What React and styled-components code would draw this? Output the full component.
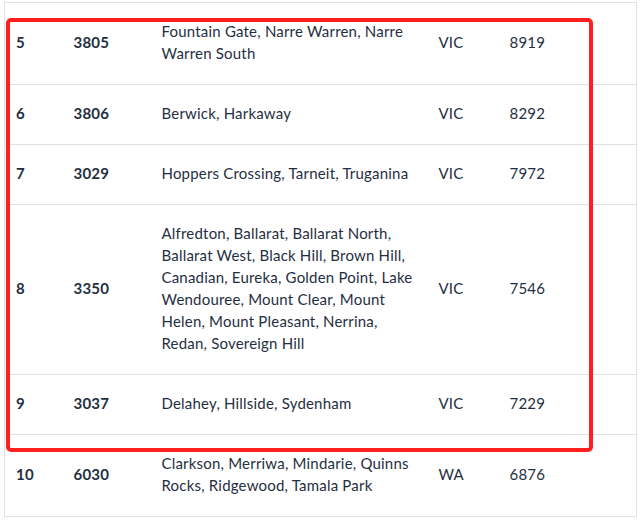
import React from 'react';
import styled, { createGlobalStyle } from 'styled-components';

const GlobalStyle = createGlobalStyle`
    html, body {
        margin: 0;
        padding: 0;
        background: #ffffff;
    }
    body {
        font-family: Lato, "Open Sans", "Liberation Sans", sans-serif;
    }
`;

const rows = [
    { rank: 5, code: '3805', suburbs: 'Fountain Gate, Narre Warren, Narre Warren South', state: 'VIC', count: '8919' },
    { rank: 6, code: '3806', suburbs: 'Berwick, Harkaway', state: 'VIC', count: '8292' },
    { rank: 7, code: '3029', suburbs: 'Hoppers Crossing, Tarneit, Truganina', state: 'VIC', count: '7972' },
    {
        rank: 8,
        code: '3350',
        suburbs: 'Alfredton, Ballarat, Ballarat North, Ballarat West, Black Hill, Brown Hill, Canadian, Eureka, Golden Point, Lake Wendouree, Mount Clear, Mount Helen, Mount Pleasant, Nerrina, Redan, Sovereign Hill',
        state: 'VIC',
        count: '7546',
    },
    { rank: 9, code: '3037', suburbs: 'Delahey, Hillside, Sydenham', state: 'VIC', count: '7229' },
    { rank: 10, code: '6030', suburbs: 'Clarkson, Merriwa, Mindarie, Quinns Rocks, Ridgewood, Tamala Park', state: 'WA', count: '6876' },
];

const App = () => {
    return (
        <>
            <GlobalStyle />
            <Page>
                <Frame>
                    <Table>
                        <colgroup>
                            <col style={{ width: 58 }} />
                            <col style={{ width: 88 }} />
                            <col style={{ width: 277 }} />
                            <col style={{ width: 71 }} />
                            <col />
                        </colgroup>
                        <tbody>
                            {rows.map((row) => (
                                <tr key={row.rank}>
                                    <Cell bold>{row.rank}</Cell>
                                    <Cell bold>{row.code}</Cell>
                                    <Cell>{row.suburbs}</Cell>
                                    <Cell>{row.state}</Cell>
                                    <Cell>{row.count}</Cell>
                                </tr>
                            ))}
                        </tbody>
                    </Table>
                    <Highlight />
                </Frame>
            </Page>
        </>
    );
};

const Page = styled.div`
    width: 640px;
    height: 527px;
    overflow: hidden;
    padding: 2px 0 0 4px;
    box-sizing: border-box;
`;

const Frame = styled.div`
    position: relative;
    width: 633px;
`;

const Table = styled.table`
    width: 633px;
    table-layout: fixed;
    border-collapse: collapse;
    border: 1px solid #dde2e5;
    color: #1f2f3f;
    font-size: 15px;
    letter-spacing: 0.2px;
    line-height: 22px;
`;

const Cell = styled.td`
    padding: 17px 11px 20px;
    border-top: 1px solid #dde2e5;
    vertical-align: middle;
    font-weight: ${(p) => (p.bold ? 700 : 400)};
`;

const Highlight = styled.div`
    position: absolute;
    left: 2px;
    top: 16px;
    width: 587px;
    height: 434px;
    box-sizing: border-box;
    border: 4px solid #ff1f1f;
    border-radius: 5px;
    pointer-events: none;
`;

export default App;
